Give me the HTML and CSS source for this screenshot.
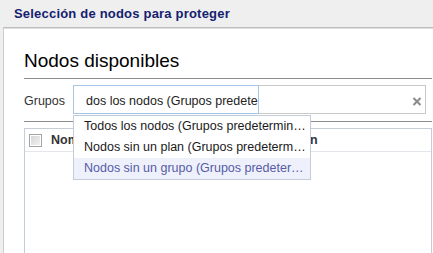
FILE: index.html
```html
<!DOCTYPE html>
<html lang="es">
<head>
    <meta charset="UTF-8">
    <meta name="viewport" content="width=device-width, initial-scale=1.0">
    <title>Selección de nodos para proteger</title>
    <link rel="stylesheet" href="styles.css">
</head>
<body>
    <div class="page-header">
        <h2 class="page-title">Selección de nodos para proteger</h2>
    </div>
    <div class="panel">
        <h1 class="section-title">Nodos disponibles</h1>

        <div class="filter-row">
            <label class="filter-label" for="groups">Grupos</label>
            <div class="combo">
                <div class="combo-input" id="groups">dos los nodos (Grupos predete</div>
                <div class="combo-rest">
                    <svg class="combo-clear" width="10" height="9" viewBox="0 0 10 9">
                        <path d="M1.5 1 L8.5 8 M8.5 1 L1.5 8" stroke="#8a8a8a" stroke-width="2" fill="none"/>
                    </svg>
                </div>
            </div>
            <ul class="combo-list">
                <li>Todos los nodos (Grupos predeterminados)</li>
                <li>Nodos sin un plan (Grupos predeterminados)</li>
                <li class="active">Nodos sin un grupo (Grupos predeterminados)</li>
            </ul>
        </div>

        <hr class="divider">

        <div class="grid">
            <div class="grid-head">
                <span class="cell-check"><span class="checkbox"></span></span>
                <span class="cell-name">Nombre del nodo</span>
                <span class="cell-desc">Descripción</span>
            </div>
        </div>
    </div>
</body>
</html>
```

FILE: styles.css
```css
html, body {
    height: 100%;
}
body {
    margin: 0;
    display: flex;
    flex-direction: column;
    background-color: #efefef;
    font-family: "Liberation Sans", Arial, sans-serif;
    color: #222;
    overflow: hidden;
}
.page-header {
    flex: none;
    height: 27px;
    padding-left: 14px;
}
.page-title {
    margin: 0;
    font-size: 13px;
    font-weight: bold;
    letter-spacing: 0.2px;
    line-height: 27px;
    color: #14216e;
}
.panel {
    flex: 1;
    display: flex;
    flex-direction: column;
    min-height: 0;
    margin-left: 3px;
    padding: 0 1px 0 20px;
    background-color: #ffffff;
    border-left: 1px solid #cdcdcd;
    border-top: 1px solid #bcbcbc;
    box-shadow: inset 0 1px #e0e0e0;
}
.section-title {
    margin: 22px 0 0;
    padding-bottom: 6px;
    font-size: 19px;
    font-weight: normal;
    line-height: 22px;
    color: #000;
    border-bottom: 1px solid #8c8c8c;
}
.filter-row {
    position: relative;
    display: flex;
    align-items: center;
    flex: none;
    margin-top: 6px;
    height: 29px;
    z-index: 2;
}
.filter-label {
    width: 49px;
    flex: none;
    padding-top: 4px;
    font-size: 12.5px;
    line-height: 15px;
    color: #333;
}
.combo {
    flex: 1;
    display: flex;
    height: 29px;
    margin-right: 6px;
}
.combo-input {
    width: 186px;
    height: 29px;
    box-sizing: border-box;
    padding: 2px 0 0 12px;
    border: 1px solid #a7c6e5;
    font-size: 12.5px;
    line-height: 27px;
    white-space: nowrap;
    overflow: hidden;
    color: #222;
}
.combo-rest {
    flex: 1;
    display: flex;
    align-items: center;
    justify-content: flex-end;
    padding-right: 3px;
    border: 1px solid #c9c9c9;
    border-left: none;
}
.combo-clear {
    margin-top: 3px;
}
.combo-list {
    position: absolute;
    top: calc(100% + 1px);
    left: 49px;
    width: 238px;
    box-sizing: border-box;
    margin: 0;
    padding: 0;
    list-style: none;
    background-color: #ffffff;
    border: 1px solid #c3ccd8;
}
.combo-list li {
    height: 21px;
    padding: 0 3px 0 10px;
    font-size: 12.5px;
    line-height: 21px;
    color: #1a1a1a;
    white-space: nowrap;
    overflow: hidden;
    text-overflow: ellipsis;
}
.combo-list li.active {
    background-color: #eef1fb;
    color: #575ba6;
}
.divider {
    flex: none;
    margin: 7px 0 0;
    border: 0;
    border-top: 1px solid #8c8c8c;
}
.grid {
    flex: 1;
    margin-top: 6px;
    border: 1px solid #c5ced8;
    border-bottom: none;
}
.grid-head {
    display: flex;
    align-items: center;
    height: 22px;
    border-bottom: 1px solid #e3e7ec;
    font-size: 12.5px;
    font-weight: bold;
    color: #333;
}
.cell-check {
    display: flex;
    padding-left: 4px;
    width: 22px;
}
.checkbox {
    width: 13px;
    height: 13px;
    box-sizing: border-box;
    border: 1px solid #a4a4a4;
    background: linear-gradient(135deg, #d4d4d4, #f4f4f4);
    box-shadow: inset 0 0 0 1px #ffffff;
}
.cell-name {
    width: 195px;
}
```
